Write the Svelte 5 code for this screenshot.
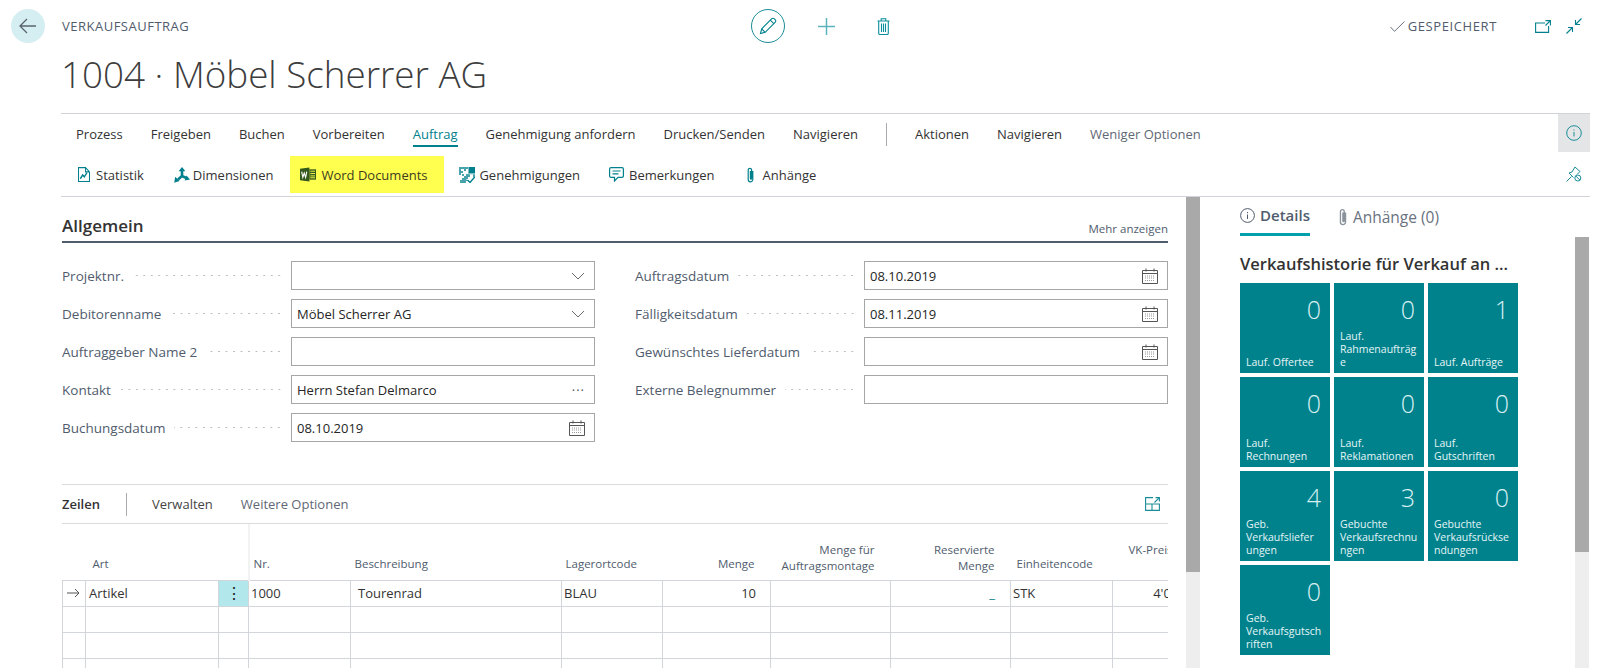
<script lang="ts">
  const menu = ['Prozess', 'Freigeben', 'Buchen', 'Vorbereiten', 'Auftrag', 'Genehmigung anfordern', 'Drucken/Senden', 'Navigieren'];

  const leftFields = [
    { label: 'Projektnr.', value: '', trail: 'chevron' },
    { label: 'Debitorenname', value: 'Möbel Scherrer AG', trail: 'chevron' },
    { label: 'Auftraggeber Name 2', value: '', trail: '' },
    { label: 'Kontakt', value: 'Herrn Stefan Delmarco', trail: 'more' },
    { label: 'Buchungsdatum', value: '08.10.2019', trail: 'date' }
  ];
  const rightFields = [
    { label: 'Auftragsdatum', value: '08.10.2019', trail: 'date' },
    { label: 'Fälligkeitsdatum', value: '08.11.2019', trail: 'date' },
    { label: 'Gewünschtes Lieferdatum', value: '', trail: 'date' },
    { label: 'Externe Belegnummer', value: '', trail: '' }
  ];

  // narrow: this label wraps a letter earlier than the others
  const tiles = [
    { n: 0, label: 'Lauf. Offertee' },
    { n: 0, label: 'Lauf. Rahmenaufträge' },
    { n: 1, label: 'Lauf. Aufträge' },
    { n: 0, label: 'Lauf. Rechnungen' },
    { n: 0, label: 'Lauf. Reklamationen' },
    { n: 0, label: 'Lauf. Gutschriften' },
    { n: 4, label: 'Geb. Verkaufslieferungen', narrow: true },
    { n: 3, label: 'Gebuchte Verkaufsrechnungen' },
    { n: 0, label: 'Gebuchte Verkaufsrücksendungen' },
    { n: 0, label: 'Geb. Verkaufsgutschriften' }
  ];
</script>

{#snippet field(f)}
  <div class="field">
    <div class="label"><span>{f.label}</span><i class="dots"></i></div>
    <div class="input">
      <span>{f.value}</span>
      {#if f.trail === 'chevron'}
        <svg class="trail" width="14" height="8" viewBox="0 0 14 8" fill="none" stroke="#6b6b6b"><path d="M1 1l6 6 6-6" /></svg>
      {:else if f.trail === 'more'}
        <span class="more">···</span>
      {:else if f.trail === 'date'}
        <svg class="trail date" width="16" height="16" viewBox="0 0 16 16" fill="none" stroke="#555">
          <path d="M.5 2.500h15v13H.5z" /><path d="M.5 5.500h15" /><path d="M4 .5v3M12 .5v3" />
          <path d="M3 8h10M3 10h10M3 12.500h10" stroke="#999" stroke-dasharray="1 1" />
        </svg>
      {/if}
    </div>
  </div>
{/snippet}

{#snippet clip(w, h, color)}
  <svg width={w} height={h} viewBox="0 0 9 16" fill="none" stroke={color} stroke-width="1.200">
    <path d="M6.800 4v8.500a2.300 2.300 0 0 1-4.600 0V3a1.700 1.700 0 0 1 3.400 0v8.500a.6.6 0 0 1-1.200 0V4" />
  </svg>
{/snippet}

<div class="page">
  <header class="top">
    <div class="top-left">
      <button class="back" aria-label="Zurück">
        <svg width="18" height="16" viewBox="0 0 18 16" fill="none" stroke="#5a6470" stroke-width="1.300"><path d="M17 8H1M8 1L1 8l7 7" /></svg>
      </button>
      <span class="caption">VERKAUFSAUFTRAG</span>
    </div>
    <div class="top-center">
      <button class="edit" aria-label="Bearbeiten">
        <svg width="18" height="18" viewBox="0 0 18 18" fill="none" stroke="#00808c" stroke-width="1.100">
          <path d="M1.500 16.500l1.200-4.700L12.800 1.700a1.600 1.600 0 0 1 2.300 0l1.200 1.200a1.600 1.600 0 0 1 0 2.300L6.200 15.300z" /><path d="M2.700 11.800l3.500 3.500M11.300 3.200l3.500 3.500" />
        </svg>
      </button>
      <svg class="plus" width="17" height="17" viewBox="0 0 17 17" stroke="#5db5bc" stroke-width="1.500"><path d="M8.500 0v17M0 8.500h17" /></svg>
      <svg class="trash" width="13" height="17" viewBox="0 0 13 17" fill="none" stroke="#0a8f9b" stroke-width="1.100">
        <path d="M.5 3h12M1.700 3v12.200c0 .7.500 1.300 1.300 1.300h7c.7 0 1.300-.6 1.300-1.300V3M4.200 3V.8h4.600V3M4.500 5.500v8.500M6.500 5.500v8.500M8.500 5.500v8.500" />
      </svg>
    </div>
    <div class="top-right">
      <svg width="15" height="11" viewBox="0 0 15 11" fill="none" stroke="#6a7380" stroke-width="1"><path d="M.5 6l4 4.300L14.500 .5" /></svg>
      <span class="saved">GESPEICHERT</span>
      <svg class="open" width="16" height="13" viewBox="0 0 16 13" fill="none" stroke="#00808c" stroke-width="1.100">
        <path d="M10 3H.6v9.400h13V6M10.500 .6h4.900v4.900M15.400 .6L10.500 5.500" />
      </svg>
      <svg class="shrink" width="16" height="16" viewBox="0 0 16 16" fill="none" stroke="#00808c" stroke-width="1.100">
        <path d="M15.500 .5L9.500 6.500M9.500 2v4.500H14M.5 15.500l6-6M2 9.500h4.500V14" />
      </svg>
    </div>
  </header>

  <h1>1004 · Möbel Scherrer AG</h1>

  <section class="ribbon">
    <div class="ribbon-main">
      <nav class="menu">
        {#each menu as m}
          <span class:active={m === 'Auftrag'}>{m}</span>
        {/each}
        <i class="sep"></i>
        <span>Aktionen</span>
        <span>Navigieren</span>
        <span class="muted">Weniger Optionen</span>
      </nav>
      <div class="tools">
        <span class="tool stat">
          <svg width="12" height="15" viewBox="0 0 14 16" preserveAspectRatio="none" fill="none" stroke="#00808c" stroke-width="1.200"><path d="M.6 .6h8.200l4.600 4.600v10.200H.6zM8.800 .6v4.600h4.600" /><path d="M2.700 12.500l2.700-4 2 2 3-4.500" stroke-width="1.600" /></svg>
          Statistik
        </span>
        <span class="tool dim">
          <svg width="16" height="16" viewBox="0 0 16 16" fill="#00808c">
            <path d="M8 9.500V3.500M8 9l4.500 2.200M8 9l-4 3.500" stroke="#00808c" stroke-width="2.600" fill="none" />
            <path d="M8 0l3.400 4.200H4.600zM16 12.400l-5.400 1.200 1.900-5zM.2 15.800l1-6 4.400 4.200z" />
          </svg>
          Dimensionen
        </span>
        <span class="tool word">
          <svg width="16" height="15" viewBox="0 0 17 15"><path d="M0 1.500L10 0v15L0 13.500z" fill="#33591c" /><path d="M10 2h7v11h-7z" fill="#33591c" /><path d="M11 4h5M11 6.500h5M11 9h5M11 11h5" stroke="#ffff50" stroke-width="1" /><path d="M1.800 4.500l1.200 6 1.500-4.500 1.500 4.500 1.200-6" fill="none" stroke="#fff" stroke-width="1.200" /></svg>
          Word Documents
        </span>
        <span class="tool gen">
          <svg width="16" height="16" viewBox="0 0 16 16"><path d="M9.500 0H16v6.500H9.500z" fill="#00808c" /><path d="M0 0h9v2H7v2H5V2H2v2h2v2H2v2H0zM6 5h3v2H7v2H5V7H3v2h2v2H3v2H1v3h6v-2h2l-2-2h2v-2h2V7h3v3h2V7.200H9.500L9 5z" fill="#00808c" opacity=".72" /><path d="M8.500 13l2.500 2.500L15.700 10" fill="none" stroke="#00808c" stroke-width="1.400" /></svg>
          Genehmigungen
        </span>
        <span class="tool bem">
          <svg width="15" height="15" viewBox="0 0 15 15" fill="none" stroke="#00808c" stroke-width="1.200"><path d="M2 .6h11c.8 0 1.400.6 1.400 1.400v7c0 .8-.6 1.400-1.400 1.400H9L5.500 14v-3.600H2C1.200 10.400.6 9.800.6 9V2C.6 1.200 1.200 .6 2 .6zM3.500 4h8M3.500 6.800h6" /></svg>
          Bemerkungen
        </span>
        <span class="tool clip">
          {@render clip(9, 16, '#00808c')}
          Anhänge
        </span>
      </div>
    </div>
    <div class="ribbon-side">
      <div class="info-btn">
        <svg width="16" height="16" viewBox="0 0 16 16" fill="none" stroke="#1a8d98" stroke-width="1"><circle cx="8" cy="8" r="7.300" /><path d="M8 7v4.500M8 4.500v1" /></svg>
      </div>
      <div class="pin-btn">
        <svg width="16" height="16" viewBox="0 0 16 16" fill="none" stroke="#1a8d98" stroke-width="1"><path d="M.5 15.500l5-5M3 7l3-1 3-5 5 4.500-3 3M3 7l4.500 4.500" /><circle cx="11.800" cy="12" r="3" /><path d="M9.700 9.900l4.200 4.200" /></svg>
      </div>
    </div>
  </section>

  <div class="body">
    <main class="content">
      <section class="general">
        <div class="tab-head">
          <h2>Allgemein</h2>
          <span class="show-more">Mehr anzeigen</span>
        </div>
        <div class="form">
          <div class="col">
            {#each leftFields as f}{@render field(f)}{/each}
          </div>
          <div class="col">
            {#each rightFields as f}{@render field(f)}{/each}
          </div>
        </div>
      </section>

      <section class="lines">
        <div class="lines-bar">
          <strong>Zeilen</strong>
          <i class="bar-sep"></i>
          <span class="dark">Verwalten</span>
          <span class="muted">Weitere Optionen</span>
          <svg class="expand" width="15" height="14" viewBox="0 0 15 14" fill="none" stroke="#1a8d98" stroke-width="1.100"><path d="M8 .6H.6v12.800h13.800V7H.6M7 7v6.400M9.500 5.500L14.400 .6M10.500 .6h3.900v3.900" /></svg>
        </div>
        <div class="table-wrap">
          <table>
            <colgroup>
              <col style="width:23px" /><col style="width:133px" /><col style="width:30px" />
              <col style="width:102px" /><col style="width:211px" /><col style="width:101px" />
              <col style="width:108px" /><col style="width:120px" /><col style="width:120px" />
              <col style="width:102px" /><col style="width:106px" />
            </colgroup>
            <thead>
              <tr>
                <th></th>
                <th class="art">Art</th>
                <th class="freeze"></th>
                <th>Nr.</th>
                <th>Beschreibung</th>
                <th>Lagerortcode</th>
                <th class="num">Menge</th>
                <th class="num two">Menge für<br />Auftragsmontage</th>
                <th class="num two">Reservierte<br />Menge</th>
                <th class="unit">Einheitencode</th>
                <th class="vk">VK-Preis</th>
              </tr>
            </thead>
            <tbody>
              <tr>
                <td class="arrow">
                  <svg width="13" height="10" viewBox="0 0 13 10" fill="none" stroke="#555" stroke-width="1"><path d="M0 5h12M8 1l4 4-4 4" /></svg>
                </td>
                <td class="first">Artikel</td>
                <td class="kebab"><span>⋮</span></td>
                <td>1000</td>
                <td class="desc">Tourenrad</td>
                <td>BLAU</td>
                <td class="num">10</td>
                <td></td>
                <td class="num link">_</td>
                <td>STK</td>
                <td class="num">4'000,00</td>
              </tr>
              {#each [1, 2, 3] as _}
                <tr>{#each Array(11) as __}<td></td>{/each}</tr>
              {/each}
            </tbody>
          </table>
        </div>
      </section>
    </main>

    <div class="scroll main-scroll"><div class="thumb"></div></div>

    <aside class="factbox">
      <div class="fb-tabs">
        <span class="fb-tab on">
          <svg width="15" height="15" viewBox="0 0 15 15" fill="none" stroke="#505c6d" stroke-width="1"><circle cx="7.500" cy="7.500" r="6.900" /><path d="M7.500 6.500v4.500M7.500 4v1.200" /></svg>
          Details
        </span>
        <span class="fb-tab att">
          {@render clip(10, 18, '#8a929c')}
          Anhänge (0)
        </span>
      </div>
      <h3>Verkaufshistorie für Verkauf an ...</h3>
      <div class="tiles">
        {#each tiles as t}
          <div class="tile">
            <span class="count">{t.n}</span>
            <span class="name" class:narrow={t.narrow}>{t.label}</span>
          </div>
        {/each}
      </div>
    </aside>

    <div class="scroll side-scroll"><div class="thumb"></div></div>
  </div>
</div>

<style>
  :global(body) {
    margin: 0;
    background: #fff;
  }
  .page {
    width: 1598px;
    height: 668px;
    overflow: hidden;
    font-family: "Open Sans", "Noto Sans", sans-serif;
    font-size: 13px;
    color: #333;
  }
  button {
    border: 0;
    padding: 0;
    background: none;
  }

  .top {
    display: flex;
    height: 52px;
    align-items: center;
  }
  .top-left {
    display: flex;
    align-items: center;
    flex: 0 0 751px;
    padding: 0 0 0 11px;
    box-sizing: border-box;
  }
  .back {
    display: flex;
    align-items: center;
    justify-content: center;
    width: 34px;
    height: 34px;
    border-radius: 50%;
    background: #d5eef2;
    margin-right: 17px;
  }
  .caption,
  .saved {
    font-size: 13px;
    font-weight: 500;
    color: #505c6d;
    letter-spacing: 0.5px;
  }
  .top-center {
    display: flex;
    align-items: center;
  }
  .edit {
    display: flex;
    align-items: center;
    justify-content: center;
    width: 34px;
    height: 34px;
    border: 1px solid #1a8d98;
    border-radius: 50%;
    box-sizing: border-box;
  }
  .plus {
    margin-left: 33px;
  }
  .trash {
    margin-left: 42px;
  }
  .top-right {
    margin-left: auto;
    display: flex;
    align-items: center;
    padding-right: 16px;
  }
  .saved {
    margin-left: 3px;
    letter-spacing: 0.6px;
  }
  .open {
    margin-left: 38px;
  }
  .shrink {
    margin-left: 15px;
  }

  h1 {
    margin: 0 0 0 61px;
    height: 61px;
    font-size: 36.800px;
    line-height: 44px;
    font-weight: 300;
    color: #3d3d3d;
  }

  .ribbon {
    display: flex;
    margin: 0 8px 0 61px;
    height: 82px;
    border-top: 1px solid #d0d3d7;
    border-bottom: 1px solid #d0d3d7;
  }
  .ribbon-main {
    flex: 1;
    padding-left: 15px;
  }
  .menu {
    display: flex;
    align-items: center;
    height: 40px;
    gap: 28px;
    color: #333;
  }
  .menu span {
    line-height: 22px;
  }
  .menu .active {
    color: #00808c;
    box-shadow: 0 2px 0 #00808c;
  }
  .sep {
    width: 1px;
    height: 23px;
    background: #a8acb2;
  }
  .muted {
    color: #5f6874;
  }
  .tools {
    display: flex;
    align-items: center;
    height: 41px;
    padding-left: 2px;
  }
  .tool {
    display: flex;
    align-items: center;
    height: 37px;
    margin-right: 30px;
    white-space: nowrap;
  }
  .tool svg {
    flex: none;
  }
  .stat {
    gap: 6px;
  }
  .dim {
    gap: 3px;
    margin-right: 17px;
  }
  .word {
    gap: 5px;
    width: 154px;
    box-sizing: border-box;
    padding-left: 10px;
    margin-right: 15px;
    background: #ffff50;
    color: #3c3c1e;
  }
  .gen {
    gap: 4px;
    margin-right: 29px;
  }
  .bem {
    gap: 5px;
    margin-right: 31px;
  }
  .clip {
    gap: 8px;
  }
  .ribbon-side {
    flex: 0 0 32px;
    display: flex;
    flex-direction: column;
  }
  .info-btn,
  .pin-btn {
    display: flex;
    align-items: center;
    justify-content: center;
  }
  .info-btn {
    height: 38px;
    background: #e3e5e7;
  }
  .pin-btn {
    height: 43px;
  }

  .body {
    display: flex;
    height: 471px;
  }
  .content {
    flex: 0 0 1106px;
    margin-left: 62px;
    margin-right: 18px;
    overflow: hidden;
  }
  .tab-head {
    display: flex;
    align-items: flex-end;
    justify-content: space-between;
    height: 46px;
    border-bottom: 2px solid #505c6d;
    padding-bottom: 3px;
    box-sizing: border-box;
  }
  h2 {
    margin: 0;
    font-size: 17px;
    line-height: 24px;
    font-weight: 600;
    color: #333;
  }
  .show-more {
    font-size: 11.500px;
    line-height: 18px;
    color: #505c6d;
  }
  .form {
    display: grid;
    grid-template-columns: 1fr 1fr;
    column-gap: 40px;
    padding-top: 18px;
  }
  .col {
    display: flex;
    flex-direction: column;
    gap: 9px;
  }
  .field {
    display: grid;
    grid-template-columns: 229px 1fr;
    height: 29px;
  }
  .label {
    display: flex;
    align-items: center;
    padding-right: 8px;
    font-size: 13.500px;
    color: #505c6d;
    white-space: nowrap;
  }
  .dots {
    flex: 1;
    height: 3px;
    margin-left: 9px;
    background-image: radial-gradient(circle, #b8bcc2 0.7px, transparent 0.9px);
    background-size: 7.500px 3px;
    background-position: right center;
  }
  .input {
    display: flex;
    align-items: center;
    justify-content: space-between;
    padding: 0 9px 0 5px;
    border: 1px solid #a6a6a6;
    color: #262626;
    box-sizing: border-box;
  }
  .more {
    color: #555;
    letter-spacing: 1px;
  }

  .lines {
    margin-top: 42px;
    border-top: 1px solid #d9dcdf;
  }
  .lines-bar {
    display: flex;
    align-items: center;
    height: 38px;
    border-bottom: 1px solid #d9dcdf;
  }
  .lines-bar strong {
    font-weight: 600;
    color: #333;
  }
  .bar-sep {
    width: 1px;
    height: 23px;
    background: #a8acb2;
    margin: 0 25px 0 26px;
  }
  .dark {
    color: #444;
    margin-right: 28px;
  }
  .expand {
    margin-left: auto;
    margin-right: 8px;
  }
  .table-wrap {
    overflow: hidden;
  }
  table {
    table-layout: fixed;
    border-collapse: collapse;
    width: 1156px;
  }
  th {
    height: 56px;
    padding: 0 5px 8px 4px;
    box-sizing: border-box;
    vertical-align: bottom;
    text-align: left;
    font-size: 11.500px;
    font-weight: 400;
    line-height: 16px;
    color: #505c6d;
    white-space: nowrap;
  }
  th.num {
    text-align: right;
    padding-right: 16px;
  }
  th.two {
    padding-bottom: 6px;
  }
  th.unit {
    padding-left: 6px;
  }
  td.num {
    text-align: right;
    padding-right: 14px;
  }
  th.vk {
    padding: 0 0 22px 16px;
  }
  th.freeze {
    border-right: 2px solid #f2f2f2;
  }
  th.art {
    padding-left: 7px;
  }
  td {
    height: 26px;
    padding: 0 2px;
    box-sizing: border-box;
    border: 1px solid #d2d5d9;
    color: #333;
    white-space: nowrap;
    overflow: hidden;
  }
  td.first {
    padding-left: 3px;
  }
  td.desc {
    padding-left: 7px;
  }
  td.arrow {
    padding: 0 0 0 4px;
  }
  td.arrow svg {
    display: block;
  }
  td.kebab {
    background: #b2e8ec;
    text-align: center;
    padding: 0;
    font-size: 16px;
    line-height: 1;
    color: #222;
  }
  td.link {
    color: #00808c;
    padding-right: 15px;
  }

  .scroll {
    flex: none;
    width: 14px;
    background: #eeeeee;
    height: 471px;
  }
  .thumb {
    background: #a9a9a9;
  }
  .main-scroll .thumb {
    height: 375px;
  }
  .side-scroll {
    margin-right: 8px;
    background: linear-gradient(#fff 40px, #eeeeee 40px);
  }
  .side-scroll .thumb {
    height: 315px;
    margin-top: 40px;
  }

  .factbox {
    flex: 0 0 375px;
    padding-left: 40px;
    box-sizing: border-box;
  }
  .fb-tabs {
    display: flex;
    gap: 28px;
    height: 39px;
  }
  .fb-tab {
    display: flex;
    align-items: center;
    gap: 5px;
    height: 39px;
    box-sizing: border-box;
    font-size: 15px;
    color: #6a7380;
  }
  .fb-tab.on {
    font-weight: 600;
    color: #505c6d;
    border-bottom: 3px solid #00a0ad;
  }
  .fb-tab.att {
    font-size: 15.500px;
  }
  h3 {
    margin: 17px 0 0;
    height: 30px;
    font-size: 16.500px;
    line-height: 22px;
    font-weight: 600;
    color: #333;
  }
  .tiles {
    display: grid;
    grid-template-columns: repeat(3, 90px);
    grid-auto-rows: 90px;
    gap: 4px;
  }
  .tile {
    display: flex;
    flex-direction: column;
    justify-content: space-between;
    padding: 10px 6px 4px;
    box-sizing: border-box;
    background: #00828d;
    color: #fff;
    overflow: hidden;
  }
  .count {
    text-align: right;
    font-size: 25px;
    font-weight: 300;
    line-height: 32px;
    padding-right: 3px;
    color: #d9f0f2;
  }
  .name {
    font-size: 10.500px;
    font-weight: 500;
    line-height: 13px;
    overflow-wrap: anywhere;
    color: #e6f5f6;
  }
  .name.narrow {
    padding-right: 6px;
  }
</style>
